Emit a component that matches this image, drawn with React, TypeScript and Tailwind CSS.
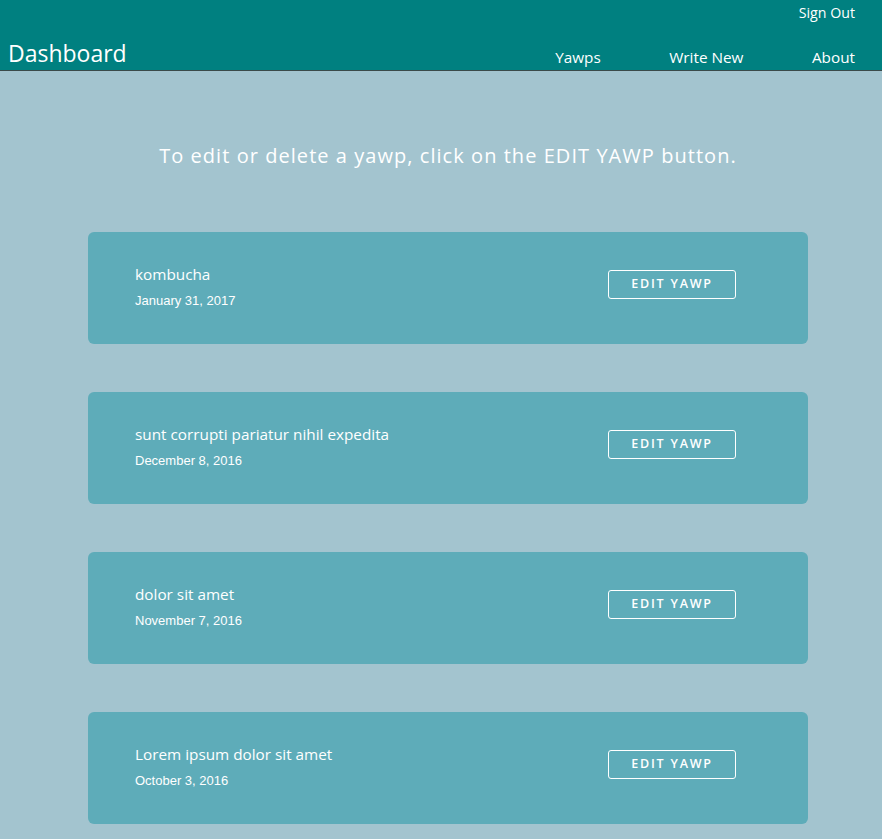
const yawps = [
  { id: "1", title: "kombucha", date: "January 31, 2017" },
  { id: "2", title: "sunt corrupti pariatur nihil expedita", date: "December 8, 2016" },
  { id: "3", title: "dolor sit amet", date: "November 7, 2016" },
  { id: "4", title: "Lorem ipsum dolor sit amet", date: "October 3, 2016" },
];

function Header() {
  return (
    <header className="h-[71px] bg-[#008080] border-b border-[#3a4a4a] text-white flex flex-col">
      <div className="flex justify-end pr-[27px] pt-[4px] h-[36px]">
        <a className="text-[14.2px] leading-[18px] cursor-pointer">Sign Out</a>
      </div>
      <div className="flex items-end justify-between pl-[8px] pr-[27px] flex-1 pb-[2px]">
        <h1 className="text-[23px] leading-[30px]">Dashboard</h1>
        <nav className="flex items-end gap-[68.5px] text-[15.3px] leading-[22px]">
          <a>Yawps</a>
          <a>Write New</a>
          <a>About</a>
        </nav>
      </div>
    </header>
  );
}

export default function App() {
  return (
    <div
      className="min-h-[839px] bg-[#a3c4cf]"
      style={{ fontFamily: '"Open Sans", sans-serif' }}
    >
      <Header />
      <main className="flex flex-col items-center pl-[14px] pb-[15px]">
        <p className="mt-[71px] text-[20px] leading-[28px] tracking-[1.05px] text-white">
          To edit or delete a yawp, click on the EDIT YAWP button.
        </p>
        <div className="mt-[62px] w-[720px] flex flex-col gap-[48px]">
          {yawps.map((yawp) => (
            <div
              key={yawp.id}
              className="h-[112px] rounded-[6px] bg-[#5eacb9] flex items-start justify-between pt-[31px] pl-[47px] pr-[72px] text-white"
            >
              <div className="flex flex-col">
                <span className="text-[15.3px] leading-[22px]">{yawp.title}</span>
                <span
                  className="text-[13px] leading-[16px] mt-[8px]"
                  style={{ fontFamily: '"Liberation Sans", Arial, sans-serif' }}
                >
                  {yawp.date}
                </span>
              </div>
              <button className="mt-[7px] w-[128px] h-[29px] border border-white rounded-[3px] text-[12.5px] tracking-[1.8px] font-semibold text-white cursor-pointer">
                EDIT YAWP
              </button>
            </div>
          ))}
        </div>
      </main>
    </div>
  );
}
